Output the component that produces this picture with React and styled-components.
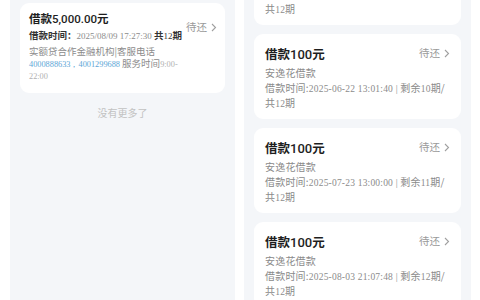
import React from "react";
import styled, { createGlobalStyle } from "styled-components";

const GlobalStyle = createGlobalStyle`
  html, body {
    margin: 0;
    padding: 0;
    background: #ffffff;
  }
  body {
    font-family: "Noto Sans CJK SC", "Noto Sans", sans-serif;
  }
`;

const Page = styled.div`
  width: 480px;
  height: 300px;
  display: flex;
  gap: 9px;
  padding-left: 10px;
  box-sizing: border-box;
  overflow: hidden;
`;

const Panel = styled.div`
  width: ${(p) => p.$w}px;
  height: 300px;
  background: #f4f6f9;
  box-sizing: border-box;
  padding: ${(p) => p.$pad};
  overflow: hidden;
  display: flex;
  flex-direction: column;
  gap: 9px;
`;

const Card = styled.div`
  background: #ffffff;
  border-radius: 9px;
  flex-shrink: 0;
  box-sizing: border-box;
  padding: ${(p) => p.$pad};
  margin-top: ${(p) => p.$mt || 0}px;
`;

const SideCard = styled(Card)`
  display: flex;
  justify-content: space-between;
`;

const Header = styled.div`
  display: flex;
  justify-content: space-between;
  align-items: center;
  height: 18px;
  margin-bottom: 2px;
`;

const Body = styled.div`
  display: flex;
  flex-direction: column;
  flex-shrink: 0;
  width: ${(p) => p.$w}px;
`;

const Title = styled.div`
  font-size: ${(p) => p.$size || 11.5}px;
  line-height: 18px;
  height: 18px;
  font-weight: 700;
  color: #1e1e1e;
  white-space: nowrap;
`;

const Amount = styled.span`
  font-family: Roboto, "Liberation Sans", sans-serif;
  font-weight: 500;
  line-height: 1;
  font-size: ${(p) => p.$size || 11.5}px;
`;

const TimeRow = styled.div`
  font-size: 9.5px;
  line-height: 14px;
  height: 14px;
  font-weight: 700;
  color: #333;
  white-space: nowrap;
  margin: 1px 0 3px;
`;

const Digits = styled.span`
  font-family: "Liberation Serif", serif;
  font-weight: 400;
  line-height: 1;
  font-size: ${(p) => p.$size || 9}px;
  color: ${(p) => p.$color || "#8c8c8c"};
`;

const Para = styled.div`
  font-size: 9.5px;
  line-height: 12px;
  color: #8c8c8c;
`;

const Line = styled.div`
  font-size: 10px;
  line-height: 15px;
  height: 15px;
  color: #8a8a8a;
  letter-spacing: 0.2px;
  white-space: nowrap;
`;

const Status = styled.div`
  display: flex;
  align-items: center;
  gap: 4px;
  font-size: 10.5px;
  line-height: 16px;
  color: #9a9a9a;
  white-space: nowrap;
  align-self: flex-start;
  margin-top: ${(p) => p.$mt || 0}px;
`;

const NoMore = styled.div`
  text-align: center;
  font-size: 10px;
  line-height: 16px;
  color: #c2c2c2;
  margin-top: 3px;
`;

const Chevron = () => (
  <svg width="6" height="9" viewBox="0 0 6 9">
    <path d="M1 1 L4.5 4.5 L1 8" fill="none" stroke="#a0a0a0" strokeWidth="1.1" />
  </svg>
);

const loans = [
  { date: "2025-05-22 13:02:10", left: 9, mt: -60 },
  { date: "2025-06-22 13:01:40", left: 10 },
  { date: "2025-07-23 13:00:00", left: 11 },
  { date: "2025-08-03 21:07:48", left: 12 },
];

const LoanCard = ({ date, left, mt }) => (
  <Card $pad="11px 11px 9px 11px" $mt={mt}>
    <Header>
      <Title $size={12.5}>
        借款<Amount $size={13}>100</Amount>元
      </Title>
      <Status>
        待还 <Chevron />
      </Status>
    </Header>
    <Line>安逸花借款</Line>
    <Line>
      借款时间:<Digits $size={9.5}>{date}</Digits>
      <Digits $size={9.5}> | </Digits> 剩余<Digits $size={9.5}>{left}</Digits>期/
    </Line>
    <Line>
      共<Digits $size={9.5}>12</Digits>期
    </Line>
  </Card>
);

const App = () => {
  return (
    <Page>
      <GlobalStyle />
      <Panel $w={225} $pad="3px 10px 0 10px">
        <SideCard $pad="6px 12px 11px 9px">
          <Body $w={157}>
            <Title>
              借款<Amount>5,000.00</Amount>元
            </Title>
            <TimeRow>
              借款时间：<Digits>2025/08/09 17:27:30</Digits> 共<Digits $color="#333">12</Digits>期
            </TimeRow>
            <Para>
              实额贷合作金融机构|客服电话 <Digits $size={8.3} $color="#5ea6d6">4000888633，4001299688</Digits>{" "}
              服务时间<Digits $size={8.3} $color="#b0b0b0">9:00-<wbr />22:00</Digits>
            </Para>
          </Body>
          <Status $mt={10}>
            待还 <Chevron />
          </Status>
        </SideCard>
        <NoMore>没有更多了</NoMore>
      </Panel>
      <Panel $w={227} $pad="0 10px 0 10px">
        {loans.map((l) => (
          <LoanCard key={l.date} date={l.date} left={l.left} mt={l.mt} />
        ))}
      </Panel>
    </Page>
  );
};

export default App;
